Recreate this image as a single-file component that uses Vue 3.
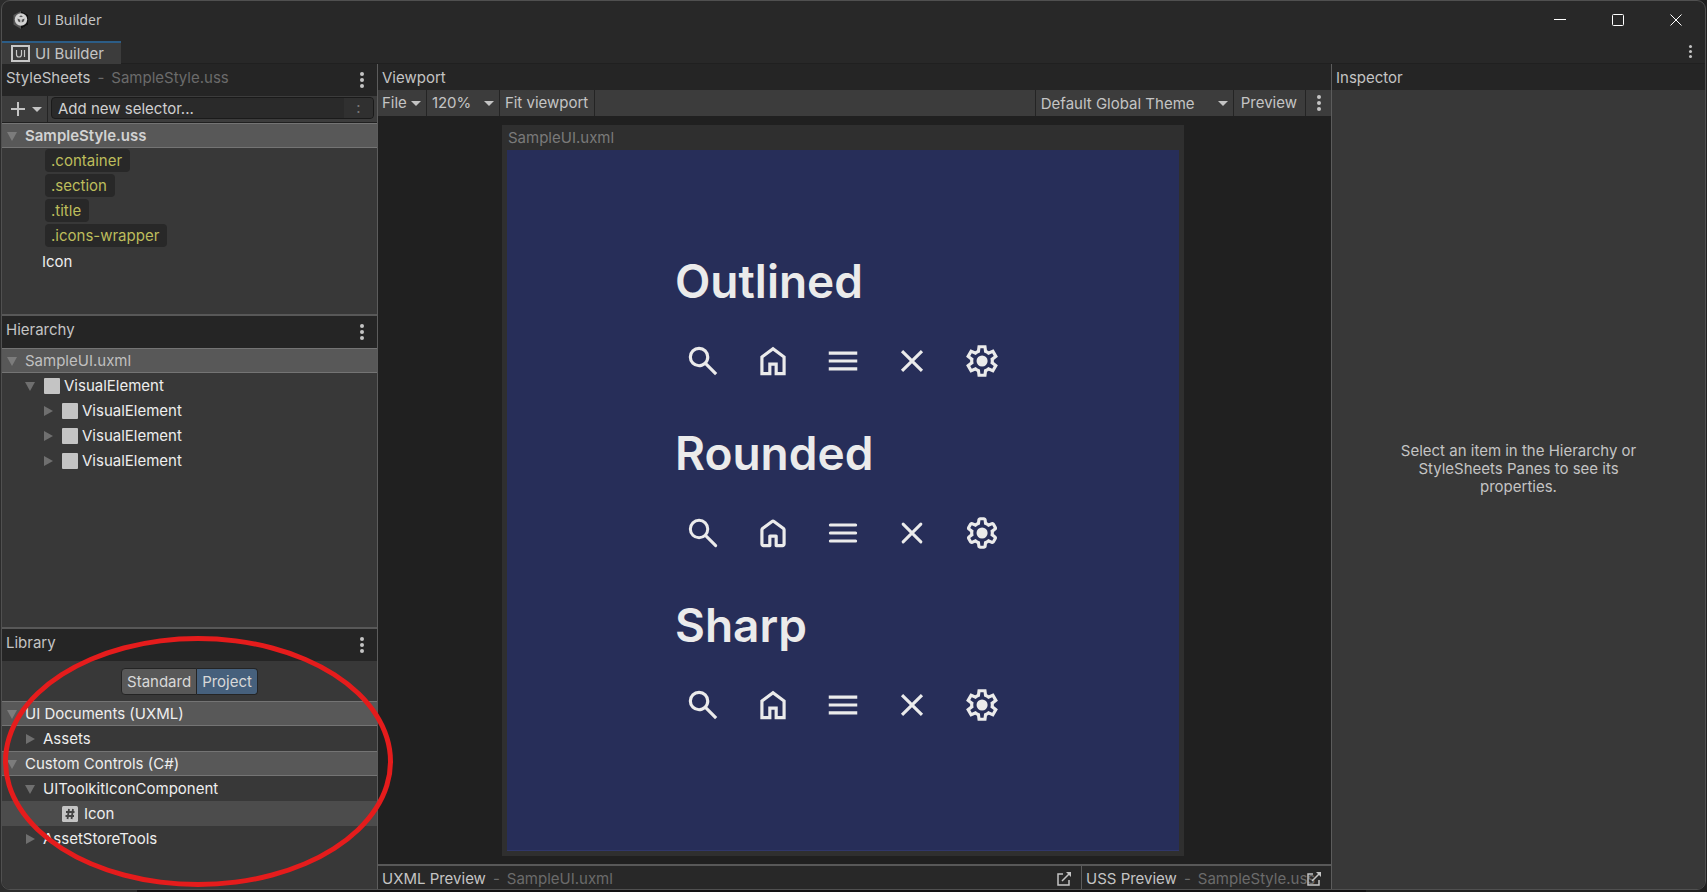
<script setup>
import { ref } from 'vue'

const selectors = ['.container', '.section', '.title', '.icons-wrapper']
const newSelector = ref('')
const zoomLevel = ref('120%')
const theme = ref('Default Global Theme')
const libraryTab = ref('Project')

const hierarchy = [
  { depth: 1, open: true },
  { depth: 2, open: false },
  { depth: 2, open: false },
  { depth: 2, open: false },
]

const sharp = {
  search: 'M784-120 532-372q-30 24-69 38t-83 14q-109 0-184.5-75.5T120-580q0-109 75.5-184.5T380-840q109 0 184.5 75.5T640-580q0 44-14 83t-38 69l252 252-56 56ZM380-400q75 0 127.5-52.5T560-580q0-75-52.5-127.5T380-760q-75 0-127.5 52.5T200-580q0 75 52.5 127.5T380-400Z',
  home: 'M240-200h120v-240h240v240h120v-360L480-740 240-560v360Zm-80 80v-480l320-240 320 240v480H520v-240h-80v240H160Z',
  menu: 'M120-240v-80h720v80H120Zm0-200v-80h720v80H120Zm0-200v-80h720v80H120Z',
  close: 'm256-200-56-56 224-224-224-224 56-56 224 224 224-224 56 56-224 224 224 224-56 56-224-224-224 224Z',
}
const gearInner = 'Zm70-80h79l14-106q31-8 57.5-23.5T639-327l99 41 39-68-86-65q5-14 7-29.5t2-31.5q0-16-2-31.5t-7-29.5l86-65-39-68-99 42q-22-23-48.5-38.5T533-694l-13-106h-79l-14 106q-31 8-57.5 23.5T321-633l-99-41-39 68 86 64q-5 15-7 30t-2 32q0 16 2 31t7 30l-86 65 39 68 99-42q22 23 48.5 38.5T427-266l13 106Zm42-180q58 0 99-41t41-99q0-58-41-99t-99-41q-59 0-99.5 41T342-480q0 58 40.5 99t99.5 41Z'
const gearSharp = 'm370-80-16-128q-13-5-24.5-12T307-235l-119 50L78-375l103-78q-1-7-1-13.5v-27q0-6.5 1-13.5L78-585l110-190 119 50q11-8 23-15t24-12l16-128h220l16 128q13 5 24.5 12t22.5 15l119-50 110 190-103 78q1 7 1 13.5v27q0 6.5-2 13.5l103 78-110 190-118-50q-11 8-23 15t-24 12L590-80H370' + gearInner
const gearRound = 'M433-80q-27 0-46.5-18T363-142l-9-66q-13-5-24.5-12T307-235l-62 26q-25 11-50 2t-39-32l-47-82q-14-23-8-49t27-43l53-40q-1-7-1-13.5v-27q0-6.5 1-13.5l-53-40q-21-17-27-43t8-49l47-82q14-23 39-32t50 2l62 26q11-8 23-15t24-12l9-66q4-26 23.5-44t46.5-18h94q27 0 46.5 18t23.5 44l9 66q13 5 24.5 12t22.5 15l62-26q25-11 50-2t39 32l47 82q14 23 8 49t-27 43l-53 40q1 7 1 13.5v27q0 6.5-2 13.5l53 40q21 17 27 43t-8 49l-48 82q-14 23-39 32t-50-2l-60-26q-11 8-23 15t-24 12l-9 66q-4 26-23.5 44T527-80h-94' + gearInner.replace('Zm70-80', 'Zm7-80')
const homeRound = 'M240-200h120v-200q0-17 11.5-28.5T400-440h160q17 0 28.5 11.5T600-400v200h120v-360L480-740 240-560v360Zm-80 0v-360q0-19 8.5-36t23.5-28l240-180q21-16 48-16t48 16l240 180q15 11 23.5 28t8.5 36v360q0 33-23.5 56.5T720-120H560q-17 0-28.5-11.5T520-160v-200h-80v200q0 17-11.5 28.5T400-120H240q-33 0-56.5-23.5T160-200Z'

const fill = (d) => ({ d, stroke: false })
const line = (d) => ({ d, stroke: true })
const sharpSet = [fill(sharp.search), fill(sharp.home), fill(sharp.menu), fill(sharp.close), fill(gearSharp)]
const roundSet = [
  line('M600-580a220 220 0 1 1-440 0a220 220 0 1 1 440 0M560-400L800-160'),
  fill(homeRound),
  line('M160-280H800M160-480H800M160-680H800'),
  line('M256-256L704-704M256-704L704-256'),
  fill(gearRound),
]
const sections = [
  { title: 'Outlined', icons: sharpSet },
  { title: 'Rounded', icons: roundSet },
  { title: 'Sharp', icons: sharpSet },
]
</script>

<template>
  <div class="window">
    <header class="titlebar">
      <svg class="app-icon" viewBox="0 0 18 20" aria-hidden="true">
        <path d="M9 1L16.500 5V14.500L9 19L1.500 14.500V5Z" fill="#555" />
        <path d="M9 1L16.500 5V14.500L9 19Z" fill="#101010" />
        <circle cx="9" cy="9.500" r="6.200" fill="#d2d2d2" />
        <path d="M5.500 8.500L8.300 9.800V12.500L6 11.300ZM12.500 8.500L9.700 9.800V12.500L12 11.300ZM7 6.300L9 5.400L11 6.300L9 7.300Z" fill="#555" />
      </svg>
      <span class="app-title">UI Builder</span>
      <div class="win-controls">
        <button type="button" aria-label="Minimize"><svg viewBox="0 0 12 12"><path d="M0 5.500H12" /></svg></button>
        <button type="button" aria-label="Maximize"><svg viewBox="0 0 12 12"><rect x=".5" y=".5" width="11" height="11" rx="1" /></svg></button>
        <button type="button" aria-label="Close"><svg viewBox="0 0 12 12"><path d="M.5 .5L11.500 11.500M11.500 .5L.5 11.500" /></svg></button>
      </div>
    </header>

    <nav class="tabstrip">
      <button type="button" class="tab">
        <svg class="tab-icon" viewBox="0 0 19 17" aria-hidden="true">
          <rect x="1" y="1" width="17" height="15" fill="none" stroke="#c8c8c8" stroke-width="2" />
          <path d="M5.500 5V9.500Q5.500 12 8 12T10.500 9.500V5M13.500 5V12" fill="none" stroke="#c8c8c8" stroke-width="1.200" />
        </svg>
        UI Builder
      </button>
      <button type="button" class="kebab small" aria-label="Window menu"><i></i><i></i><i></i></button>
    </nav>

    <main class="workspace">
      <aside class="left">
        <section class="pane stylesheets">
          <header class="pane-head tall">
            <h2>StyleSheets</h2><span class="sub">-</span><span class="sub">SampleStyle.uss</span>
            <button type="button" class="kebab" aria-label="StyleSheets menu"><i></i><i></i><i></i></button>
          </header>
          <div class="add-bar">
            <button type="button" class="add" aria-label="Add style sheet">
              <svg width="16" height="16" viewBox="0 0 16 16"><path d="M8 1V15M1 8H15" stroke="#c4c4c4" stroke-width="2" /></svg>
              <span class="caret"></span>
            </button>
            <div class="field">
              <input v-model="newSelector" type="text" placeholder="Add new selector..." aria-label="Add new selector" />
              <button type="button" class="field-btn" aria-label="Pseudo states">:</button>
            </div>
          </div>
          <button type="button" class="row bar bold"><span class="tri down"></span>SampleStyle.uss</button>
          <ul class="selectors">
            <li v-for="s in selectors" :key="s"><span class="pill">{{ s }}</span></li>
            <li class="plain">Icon</li>
          </ul>
        </section>

        <section class="pane hierarchy">
          <header class="pane-head tall">
            <h2>Hierarchy</h2>
            <button type="button" class="kebab" aria-label="Hierarchy menu"><i></i><i></i><i></i></button>
          </header>
          <button type="button" class="row bar dim"><span class="tri down"></span>SampleUI.uxml</button>
          <button v-for="(n, i) in hierarchy" :key="i" type="button" class="row" :class="'depth' + n.depth">
            <span class="tri" :class="n.open ? 'down' : 'right'"></span><span class="swatch"></span>VisualElement
          </button>
        </section>

        <section class="pane library">
          <header class="pane-head tall">
            <h2>Library</h2>
            <button type="button" class="kebab" aria-label="Library menu"><i></i><i></i><i></i></button>
          </header>
          <div class="toggle">
            <button v-for="t in ['Standard', 'Project']" :key="t" type="button" :class="{ on: libraryTab === t }" :aria-pressed="libraryTab === t" @click="libraryTab = t">{{ t }}</button>
          </div>
          <button type="button" class="row bar"><span class="tri down"></span>UI Documents (UXML)</button>
          <button type="button" class="row depth1"><span class="tri right"></span>Assets</button>
          <button type="button" class="row bar"><span class="tri down"></span>Custom Controls (C#)</button>
          <button type="button" class="row depth1"><span class="tri down"></span>UIToolkitIconComponent</button>
          <button type="button" class="row leaf hover">
            <svg width="16" height="16" viewBox="0 0 16 16" aria-hidden="true">
              <rect width="16" height="16" rx="1.500" fill="#c4c4c4" />
              <path d="M7 3L5.500 13M11 3L9.500 13M4 6H12.500M3.500 10H12" stroke="#444" stroke-width="1.800" />
            </svg>
            Icon
          </button>
          <button type="button" class="row depth1"><span class="tri right"></span>AssetStoreTools</button>
          <div class="annotation"></div>
        </section>
      </aside>

      <section class="center">
        <header class="pane-head"><h2>Viewport</h2></header>
        <div class="toolbar">
          <button type="button" class="file">File<span class="caret"></span></button>
          <div class="select zoom">
            <select v-model="zoomLevel" aria-label="Zoom"><option>100%</option><option>120%</option></select>
            <span class="caret"></span>
          </div>
          <button type="button" class="fit">Fit viewport</button>
          <span class="spacer"></span>
          <div class="select theme">
            <select v-model="theme" aria-label="Theme"><option>Default Global Theme</option></select>
            <span class="caret"></span>
          </div>
          <button type="button" class="preview-btn">Preview</button>
          <button type="button" class="kebab" aria-label="Viewport menu"><i></i><i></i><i></i></button>
        </div>
        <div class="stage">
          <article class="canvas">
            <div class="canvas-name">SampleUI.uxml</div>
            <div class="document">
              <div class="doc-inner">
                <section v-for="s in sections" :key="s.title" class="doc-section">
                  <h1>{{ s.title }}</h1>
                  <div class="icons">
                    <svg v-for="(ic, i) in s.icons" :key="i" viewBox="0 -960 960 960" aria-hidden="true">
                      <path :d="ic.d" :class="{ line: ic.stroke }" />
                    </svg>
                  </div>
                </section>
              </div>
            </div>
          </article>
        </div>
        <footer class="previews">
          <div class="uxml">
            <h2>UXML Preview</h2><span class="sub">-</span><span class="sub">SampleUI.uxml</span>
            <button type="button" class="open" aria-label="Open UXML file">
              <svg viewBox="0 0 14 14"><path d="M6 2H1V13H12V8M5 9L12.500 1.500" /><path class="head" d="M9 0H14V5Z" /></svg>
            </button>
          </div>
          <div class="uss">
            <h2>USS Preview</h2><span class="sub">-</span><span class="sub">SampleStyle.uss</span>
            <button type="button" class="open" aria-label="Open USS file">
              <svg viewBox="0 0 14 14"><path d="M6 2H1V13H12V8M5 9L12.500 1.500" /><path class="head" d="M9 0H14V5Z" /></svg>
            </button>
          </div>
        </footer>
      </section>

      <aside class="inspector">
        <header class="pane-head"><h2>Inspector</h2></header>
        <div class="inspector-body">
          <p>Select an item in the Hierarchy or StyleSheets Panes to see its properties.</p>
        </div>
      </aside>
    </main>
  </div>
</template>

<style>
body {
  margin: 0;
  background: linear-gradient(90deg, #2c2c2c 0 8%, #121012 8% 80%, #202020 80%);
}
</style>

<style scoped>
* { box-sizing: border-box; }
.window {
  display: flex;
  flex-direction: column;
  height: calc(100vh - 2px);
  margin: 0 1px 2px;
  border: 1px solid #505050;
  border-radius: 9px;
  background: #282828;
  color: #c4c4c4;
  font: 15px/20px Inter, "Liberation Sans", sans-serif;
  overflow: hidden;
}
button, input, select {
  margin: 0;
  padding: 0;
  border: 0;
  background: none;
  color: inherit;
  font: inherit;
  text-align: left;
  appearance: none;
  outline: none;
}
h1, h2, p, ul { margin: 0; padding: 0; font: inherit; }
ul { list-style: none; }

.titlebar { display: flex; align-items: center; height: 40px; padding: 0 0 3px 10px; flex: none; }
.app-icon { width: 18px; height: 20px; }
.app-title { flex: 1; margin-left: 7px; font: 14px/20px "Open Sans", "Noto Sans", sans-serif; color: #c8c8c8; }
.win-controls { display: flex; }
.win-controls button { width: 58px; height: 36px; display: flex; align-items: center; justify-content: center; }
.win-controls svg { width: 12px; height: 12px; fill: none; stroke: #fff; stroke-width: 1; }

.tabstrip { display: flex; justify-content: space-between; height: 23px; flex: none; border-bottom: 1px solid #202020; }
.tab {
  display: flex;
  align-items: center;
  gap: 5px;
  height: 23px;
  padding: 0 17px 0 9px;
  border-top: 2px solid #2c5d87;
  background: #3c3c3c;
}
.tab-icon { width: 19px; height: 17px; }

.kebab { display: flex; flex-direction: column; align-items: center; justify-content: center; gap: 2px; width: 30px; flex: none; }
.kebab i { width: 4px; height: 4px; border-radius: 2px; background: #c4c4c4; }
.kebab.small { padding-bottom: 2px; }
.kebab.small i { width: 3px; height: 3px; }
.caret { flex: none; border: 5px solid transparent; border-top-color: #c4c4c4; border-bottom: 0; }

.workspace { flex: 1; min-height: 0; display: grid; grid-template-columns: 376fr 953fr 374fr; }
.left { display: flex; flex-direction: column; min-width: 0; background: #383838; border-right: 1px solid #5c5c5c; }
.pane { display: flex; flex-direction: column; min-height: 0; position: relative; }
.stylesheets { flex: 250 1 0; }
.hierarchy { flex: 311 1 0; border-top: 2px solid #585858; }
.library { flex: 260 1 0; border-top: 2px solid #585858; }
.pane-head { display: flex; height: 26px; padding-left: 4px; line-height: 28px; background: #252525; flex: none; gap: 7px; }
.pane-head.tall { height: 32px; }
.pane-head .kebab { margin-left: auto; }
.sub { color: #6b6b6b; white-space: nowrap; }

.add-bar { display: flex; height: 27px; background: #3c3c3c; border-bottom: 1px solid #202020; flex: none; }
.add { display: flex; align-items: center; gap: 6px; width: 46px; padding-left: 8px; border-right: 1px solid #242424; }
.field { display: flex; flex: 1; min-width: 0; margin: 1px 3px 3px; border: 1px solid #1a1a1a; border-radius: 4px; background: #2a2a2a; overflow: hidden; }
.field input { flex: 1; min-width: 0; padding: 1px 0 0 6px; }
.field input::placeholder { color: #d0d0d0; opacity: 1; }
.field-btn { width: 29px; text-align: center; background: #303030; color: #777; }

.row { display: flex; align-items: center; width: 100%; height: 25px; padding: 1px 0 0 5px; color: #eee; flex: none; }
.row.bar { background: #585858; border-top: 1px solid #747474; border-bottom: 1px solid #747474; }
.row.bold { color: #d2d2d2; font-weight: 600; }
.row.bar.dim { color: #c0c0c0; }
.row.depth1 { padding-left: 23px; }
.row.depth2 { padding-left: 41px; }
.row.leaf { padding-left: 60px; gap: 6px; }
.row.hover { background: #4c4c4c; }
.tri { display: flex; width: 10px; flex: none; margin-right: 8px; }
.tri.down { border: 5px solid transparent; border-top: 9px solid #6f6f6f; border-bottom: 0; }
.row.bar .tri { border-top-color: #7c7c7c; }
.tri.right { margin: 0 7px 0 1px; border: 5px solid transparent; border-left: 9px solid #6f6f6f; border-right: 0; }
.swatch { width: 16px; height: 16px; margin: 0 4px 0 1px; border-radius: 1px; background: #c4c4c4; }

.selectors li { display: flex; align-items: center; height: 25px; padding-left: 43px; }
.pill { height: 23px; padding: 0 8px 0 6px; border-radius: 4px; background: #282828; color: #bdbd5c; line-height: 23px; }
.selectors li.plain { padding: 2px 0 0 40px; color: #eee; }

.toggle { display: flex; justify-content: center; padding: 7px 0 6px; flex: none; }
.toggle button { height: 27px; padding: 0 5px; border: 1px solid #242424; border-radius: 4px 0 0 4px; background: #585858; color: #d8d8d8; }
.toggle button + button { border-left: 0; border-radius: 0 4px 4px 0; }
.toggle button.on { background: #46607c; }
.annotation {
  position: absolute;
  z-index: 2;
  inset: 7px -16px 2px 1px;
  border: 5px solid #e51c1c;
  border-radius: 50%;
  pointer-events: none;
}

.center { display: flex; flex-direction: column; min-width: 0; }
.toolbar { display: flex; height: 26px; background: #3c3c3c; flex: none; }
.toolbar > button, .select { display: flex; align-items: center; border-right: 1px solid #242424; }
.file { gap: 4px; padding: 0 5px 0 4px; }
.select { position: relative; }
.select select { width: 100%; height: 26px; padding-left: 5px; }
.select .caret { position: absolute; right: 5px; pointer-events: none; }
.zoom { width: 73px; }
.fit { padding: 0 6px 0 5px; }
.spacer { flex: 1; }
.theme { width: 199px; border-left: 1px solid #242424; }
.theme select { padding-top: 2px; }
.preview-btn { padding: 0 8px 0 7px; }
.toolbar .kebab { width: 25px; border: 0; }

.stage { flex: 1; min-height: 0; display: grid; grid-template-columns: 124fr 682fr 147fr; padding: 9px 0 8px; background: #202020; }
.canvas { grid-column: 2; display: flex; flex-direction: column; padding: 0 5px 5px; background: #2f2f2f; }
.canvas-name { height: 25px; padding-left: 1px; line-height: 25px; color: #7a7a7a; }
.document { flex: 1; display: flex; align-items: center; justify-content: center; padding-bottom: 28px; background: #272e59; border-bottom: 1px solid #30376a; }
.doc-inner { width: 50%; display: flex; flex-direction: column; gap: 41px; }
.doc-section { display: flex; flex-direction: column; gap: 29px; }
.doc-section h1 { font-size: 46px; line-height: 64px; font-weight: 600; color: #ebebeb; }
.icons { display: flex; justify-content: space-between; width: 317px; margin-left: 9px; }
.icons svg { width: 38px; height: 38px; fill: #ebebeb; }
.icons .line { fill: none; stroke: #ebebeb; stroke-width: 76; stroke-linecap: round; }

.previews { display: grid; grid-template-columns: 703fr 250fr; height: 25px; border-top: 2px solid #585858; background: #282828; line-height: 26px; flex: none; }
.previews > div { position: relative; display: flex; gap: 7px; min-width: 0; padding-left: 4px; overflow: hidden; white-space: nowrap; }
.uss { border-left: 1px solid #5c5c5c; }
.open { position: absolute; right: 10px; top: 6px; width: 14px; height: 14px; }
.open svg { display: block; width: 14px; height: 14px; fill: none; stroke: #c4c4c4; stroke-width: 1.500; }
.open .head { fill: #c4c4c4; stroke: none; }

.inspector { display: flex; flex-direction: column; min-width: 0; background: #383838; border-left: 1px solid #5c5c5c; }
.inspector-body { flex: 1; display: flex; align-items: center; justify-content: center; padding: 0 60px 42px; }
.inspector-body p { max-width: 250px; line-height: 18px; text-align: center; }
</style>
